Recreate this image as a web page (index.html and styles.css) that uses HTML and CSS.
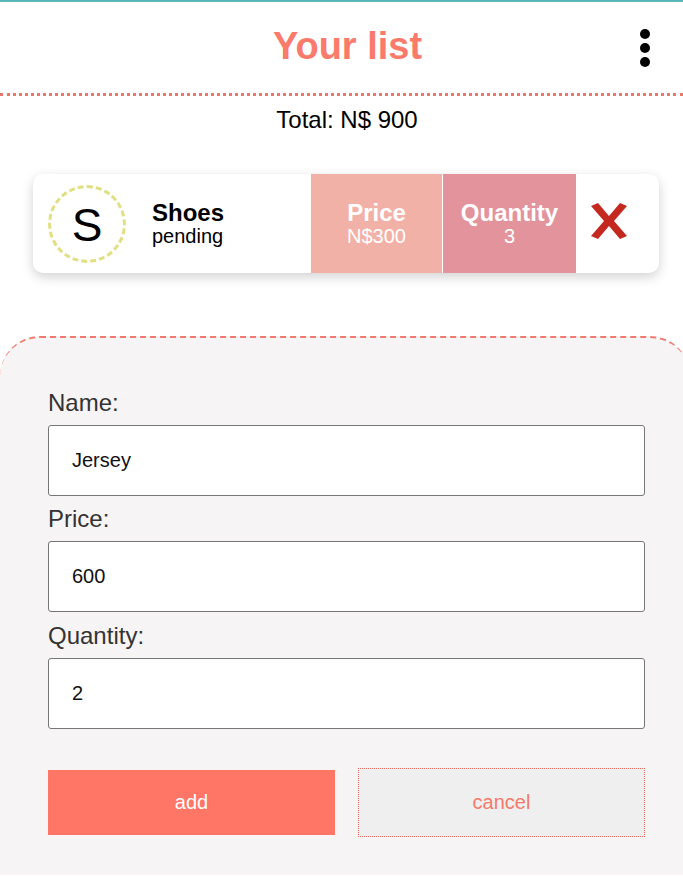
FILE: index.html
```html
<!DOCTYPE html>
<html>
<head>
<meta charset="utf-8">
<link rel="stylesheet" href="styles.css">
</head>
<body>
<header class="topbar">
  <div class="spacer"></div>
  <h1 class="title">Your list</h1>
  <button class="kebab" aria-label="menu">
    <svg width="10" height="38" viewBox="0 0 10 38"><circle cx="5" cy="5" r="5"/><circle cx="5" cy="19" r="5"/><circle cx="5" cy="33" r="5"/></svg>
  </button>
</header>
<div class="total">Total: N$ 900</div>

<div class="card">
  <div class="info">
    <div class="avatar">S</div>
    <div class="meta">
      <div class="big">Shoes</div>
      <div class="small">pending</div>
    </div>
  </div>
  <div class="stat price">
    <div class="big">Price</div>
    <div class="small">N$300</div>
  </div>
  <div class="stat qty">
    <div class="big">Quantity</div>
    <div class="small">3</div>
  </div>
  <div class="remove">
    <svg width="40" height="40" viewBox="0 0 40 40">
      <path d="M2 5 L9 2 L20 15 L31 2 L38 5 L25 20 L38 35 L31 38 L20 25 L9 38 L2 35 L15 20 Z" fill="#c4291f"/>
    </svg>
  </div>
</div>

<form class="panel">
  <label class="lbl">Name:</label>
  <input class="field" type="text" value="Jersey">
  <label class="lbl">Price:</label>
  <input class="field" type="text" value="600">
  <label class="lbl">Quantity:</label>
  <input class="field" type="text" value="2">
  <div class="actions">
    <button type="button" class="btn add">add</button>
    <button type="button" class="btn cancel">cancel</button>
  </div>
</form>
</body>
</html>
```
FILE: styles.css
```css
html, body {
  margin: 0;
  padding: 0;
  overflow: hidden;
}
body {
  font-family: "Liberation Sans", Arial, sans-serif;
  background: #ffffff;
  border-top: 2px solid #5bb8b8;
  color: #000;
}
.topbar {
  height: 91px;
  display: grid;
  grid-template-columns: 1fr auto 1fr;
  align-items: center;
  border-bottom: 3px dotted #e9786b;
}
.title {
  margin: 0;
  padding: 0 0 2px 12px;
  font-size: 38px;
  font-weight: bold;
  color: #fa7a6b;
}
.kebab {
  justify-self: end;
  margin-right: 33px;
  padding: 0;
  border: 0;
  background: none;
  display: flex;
}
.kebab svg { fill: #000; }
.total {
  margin-top: 10px;
  padding-left: 11px;
  height: 28px;
  line-height: 28px;
  text-align: center;
  font-size: 24px;
}
.card {
  margin: 40px 0 0 33px;
  width: 626px;
  height: 99px;
  display: flex;
  background: #fff;
  border-radius: 10px;
  box-shadow: 0 4px 12px rgba(0, 0, 0, 0.18);
  overflow: hidden;
}
.info {
  width: 278px;
  display: flex;
  align-items: center;
  padding-left: 15px;
  box-sizing: border-box;
}
.avatar {
  width: 78px;
  height: 78px;
  box-sizing: border-box;
  border: 3px dashed #e1df82;
  border-radius: 50%;
  display: flex;
  align-items: center;
  justify-content: center;
  font-size: 46px;
  line-height: 1;
  padding-top: 2px;
}
.meta {
  margin-left: 26px;
  display: flex;
  flex-direction: column;
}
.big {
  font-size: 24px;
  font-weight: bold;
  line-height: 24px;
}
.small {
  font-size: 20px;
  line-height: 22px;
}
.stat {
  display: flex;
  flex-direction: column;
  align-items: center;
  justify-content: center;
  color: #fff;
  box-sizing: border-box;
}
.price {
  width: 131px;
  background: #f2b1a7;
  margin-right: 1px;
}
.qty {
  width: 133px;
  background: #e3939c;
}
.remove {
  flex: 1;
  display: flex;
  align-items: center;
  padding-left: 13px;
  padding-bottom: 5px;
}
.panel {
  margin-top: 63px;
  width: 690px;
  box-sizing: border-box;
  background: #f7f4f5;
  border-top: 2px dashed #f07a6e;
  border-radius: 40px 40px 0 0;
  padding: 41px 45px 38px 48px;
  display: flex;
  flex-direction: column;
}
.lbl {
  display: block;
  margin: 9.5px 0 9px;
  font-size: 24px;
  line-height: 27px;
  color: #333;
}
.field {
  width: 597px;
  height: 71px;
  box-sizing: border-box;
  margin: 0;
  border: 1px solid #767676;
  border-radius: 3px;
  background: #fff;
  padding: 0 0 0 23px;
  font-family: "Liberation Sans", Arial, sans-serif;
  font-size: 20px;
  color: #111;
}
.actions {
  margin-top: 39.5px;
  display: flex;
  align-items: center;
  gap: 23px;
  width: 597px;
}
.btn {
  width: 287px;
  font-family: "Liberation Sans", Arial, sans-serif;
  font-size: 20px;
  margin: 0;
  padding: 0;
}
.add {
  height: 65px;
  background: #ff7566;
  color: #fff;
  border: 0;
}
.cancel {
  height: 69px;
  background: #efefef;
  color: #f47a6c;
  border: 1px dotted #e06a60;
}
```
